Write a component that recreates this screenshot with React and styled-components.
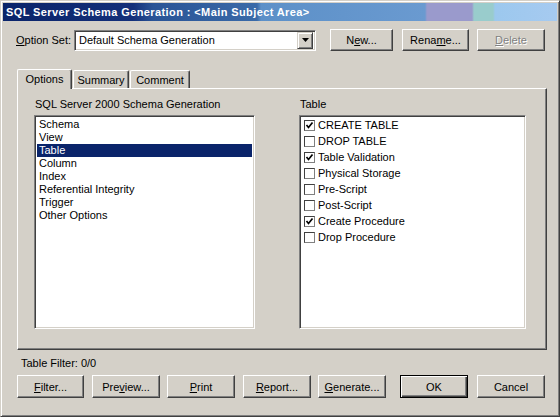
import React from 'react';
import styled, { createGlobalStyle } from 'styled-components';

const GlobalStyle = createGlobalStyle`
  html, body {
    margin: 0;
    padding: 0;
    background: #d4d0c8;
  }
  body {
    font-family: "Liberation Sans", Arial, sans-serif;
    font-size: 11px;
    color: #000;
  }
`;

const Window = styled.div`
  box-sizing: border-box;
  width: 560px;
  height: 417px;
  background: #d4d0c8;
  border: 1px solid;
  border-color: #d4d0c8 #404040 #404040 #d4d0c8;
  box-shadow: inset 1px 1px 0 #ffffff, inset -1px -1px 0 #808080;
  padding: 2px;
  display: flex;
  flex-direction: column;
`;

const TitleBar = styled.div`
  height: 18px;
  display: flex;
  align-items: center;
  padding-left: 3px;
  color: #ffffff;
  font-weight: bold;
  font-size: 11px;
  letter-spacing: 0.4px;
  background: linear-gradient(
    to right,
    #0a246a 0px,
    #14307a 130px,
    #2a5496 150px,
    #3a6aa8 254px,
    #5c90c8 258px,
    #6a9ad0 422px,
    #9a9acc 424px,
    #9a9acc 469px,
    #99cccc 471px,
    #99cccc 490px,
    #9cc8ee 492px,
    #a6caf0 100%
  );
`;

const OptionRow = styled.div`
  display: flex;
  align-items: center;
  margin-top: 8px;
  height: 22px;
  padding-left: 13px;
`;

const FieldLabel = styled.span`
  width: 58px;
  white-space: nowrap;
`;

const Combo = styled.div`
  box-sizing: border-box;
  width: 242px;
  height: 21px;
  background: #fff;
  border: 1px solid;
  border-color: #808080 #ffffff #ffffff #808080;
  box-shadow: inset 1px 1px 0 #404040, inset -1px -1px 0 #d4d0c8;
  display: flex;
  align-items: center;
  padding: 2px 2px 2px 4px;
`;

const ComboText = styled.span`
  flex: 1;
`;

const ComboButton = styled.div`
  box-sizing: border-box;
  width: 16px;
  height: 17px;
  background: #d4d0c8;
  border: 1px solid;
  border-color: #d4d0c8 #404040 #404040 #d4d0c8;
  box-shadow: inset 1px 1px 0 #ffffff, inset -1px -1px 0 #808080;
  display: flex;
  align-items: center;
  justify-content: center;
`;

const Button = styled.button`
  box-sizing: border-box;
  width: ${p => p.$w || 68}px;
  height: ${p => p.$h || 23}px;
  margin-left: ${p => p.$ml || 0}px;
  padding: 0;
  font-family: "Liberation Sans", Arial, sans-serif;
  font-size: 11px;
  color: ${p => (p.disabled ? '#808080' : '#000')};
  text-shadow: ${p => (p.disabled ? '1px 1px 0 #ffffff' : 'none')};
  background: #d4d0c8;
  border: 1px solid;
  border-color: ${p => (p.$default ? '#000' : '#ffffff #404040 #404040 #ffffff')};
  box-shadow: ${p =>
    p.$default
      ? 'inset 1px 1px 0 #ffffff, inset -1px -1px 0 #404040, inset -2px -2px 0 #808080'
      : 'inset -1px -1px 0 #808080'};
  cursor: default;
  u {
    text-decoration: underline;
  }
`;

const TabStrip = styled.div`
  display: flex;
  align-items: flex-end;
  margin-top: 17px;
  padding-left: 14px;
  height: 20px;
`;

const Tab = styled.div`
  box-sizing: border-box;
  width: ${p => p.$w}px;
  height: ${p => (p.$active ? 20 : 18)}px;
  margin-right: 1px;
  display: flex;
  align-items: center;
  justify-content: center;
  padding-bottom: ${p => (p.$active ? 2 : 0)}px;
  background: #d4d0c8;
  border-top: 1px solid #ffffff;
  border-left: 1px solid #ffffff;
  border-right: 1px solid #404040;
  border-radius: 2px 2px 0 0;
  box-shadow: inset -1px 0 0 #808080;
  position: relative;
  z-index: ${p => (p.$active ? 2 : 1)};
  margin-bottom: ${p => (p.$active ? -1 : 0)}px;
`;

const Panel = styled.div`
  box-sizing: border-box;
  margin-left: 14px;
  width: 530px;
  height: 262px;
  border: 1px solid;
  border-color: #ffffff #404040 #404040 #ffffff;
  box-shadow: inset -1px -1px 0 #808080;
  padding: 9px 0 0 16px;
  display: grid;
  grid-template-columns: 221px 227px;
  column-gap: 44px;
`;

const Column = styled.div`
  display: flex;
  flex-direction: column;
`;

const GroupLabel = styled.div`
  height: 13px;
  line-height: 13px;
  margin: 0 0 4px ${p => p.$ml || 1}px;
`;

const ListBox = styled.div`
  box-sizing: border-box;
  height: 214px;
  background: #fff;
  border: 1px solid;
  border-color: #808080 #ffffff #ffffff #808080;
  box-shadow: inset 1px 1px 0 #404040, inset -1px -1px 0 #d4d0c8;
  padding: 2px 2px;
  padding-top: ${p => p.$pt || 2}px;
`;

const ListItem = styled.div`
  height: 13px;
  line-height: 13px;
  padding-left: 2px;
  background: ${p => (p.$selected ? '#0a246a' : 'transparent')};
  color: ${p => (p.$selected ? '#ffffff' : '#000')};
`;

const CheckRow = styled.div`
  height: 16px;
  display: flex;
  align-items: center;
  padding-left: 2px;
`;

const CheckBox = styled.span`
  box-sizing: border-box;
  width: 11px;
  height: 11px;
  margin-right: 3px;
  background: #fff;
  border: 1px solid;
  border-color: #404040 #808080 #808080 #404040;
  display: flex;
  align-items: center;
  justify-content: center;
`;

const FilterText = styled.div`
  margin: 7px 0 0 18px;
  height: 13px;
  line-height: 13px;
`;

const BottomRow = styled.div`
  display: flex;
  margin-top: 5px;
  padding-left: 14px;
`;

const Check = () => (
  <svg width="9" height="9" viewBox="0 0 9 9">
    <path d="M1.5 4 L3.5 6.5 L7.5 1.5" fill="none" stroke="#000" strokeWidth="1.7" />
  </svg>
);

const Arrow = () => (
  <svg width="7" height="4" viewBox="0 0 7 4">
    <path d="M0 0 H7 L3.5 4 Z" fill="#000" />
  </svg>
);

const categories = ['Schema', 'View', 'Table', 'Column', 'Index', 'Referential Integrity', 'Trigger', 'Other Options'];

const tableOptions = [
  { label: 'CREATE TABLE', checked: true },
  { label: 'DROP TABLE', checked: false },
  { label: 'Table Validation', checked: true },
  { label: 'Physical Storage', checked: false },
  { label: 'Pre-Script', checked: false },
  { label: 'Post-Script', checked: false },
  { label: 'Create Procedure', checked: true },
  { label: 'Drop Procedure', checked: false },
];

export default function App() {
  return (
    <>
      <GlobalStyle />
      <Window>
        <TitleBar>SQL Server Schema Generation : &lt;Main Subject Area&gt;</TitleBar>

        <OptionRow>
          <FieldLabel><u>O</u>ption Set:</FieldLabel>
          <Combo>
            <ComboText>Default Schema Generation</ComboText>
            <ComboButton><Arrow /></ComboButton>
          </Combo>
          <Button $w={63} $h={22} $ml={14}>N<u>e</u>w...</Button>
          <Button $w={67} $h={22} $ml={9}>Rena<u>m</u>e...</Button>
          <Button $w={68} $h={22} $ml={8} disabled><u>D</u>elete</Button>
        </OptionRow>

        <TabStrip>
          <Tab $w={55} $active>Options</Tab>
          <Tab $w={56}>Summary</Tab>
          <Tab $w={60}>Comment</Tab>
        </TabStrip>

        <Panel>
          <Column>
            <GroupLabel>SQL Server 2000 Schema Generation</GroupLabel>
            <ListBox>
              {categories.map(c => (
                <ListItem key={c} $selected={c === 'Table'}>{c}</ListItem>
              ))}
            </ListBox>
          </Column>
          <Column>
            <GroupLabel>Table</GroupLabel>
            <ListBox $pt={1}>
              {tableOptions.map(o => (
                <CheckRow key={o.label}>
                  <CheckBox>{o.checked && <Check />}</CheckBox>
                  {o.label}
                </CheckRow>
              ))}
            </ListBox>
          </Column>
        </Panel>

        <FilterText>Table Filter: 0/0</FilterText>

        <BottomRow>
          <Button $w={67}><u>F</u>ilter...</Button>
          <Button $ml={8}>Pre<u>v</u>iew...</Button>
          <Button $ml={7}><u>P</u>rint</Button>
          <Button $ml={8}><u>R</u>eport...</Button>
          <Button $ml={7}><u>G</u>enerate...</Button>
          <Button $ml={14} $default>OK</Button>
          <Button $ml={9}>Cancel</Button>
        </BottomRow>
      </Window>
    </>
  );
}
